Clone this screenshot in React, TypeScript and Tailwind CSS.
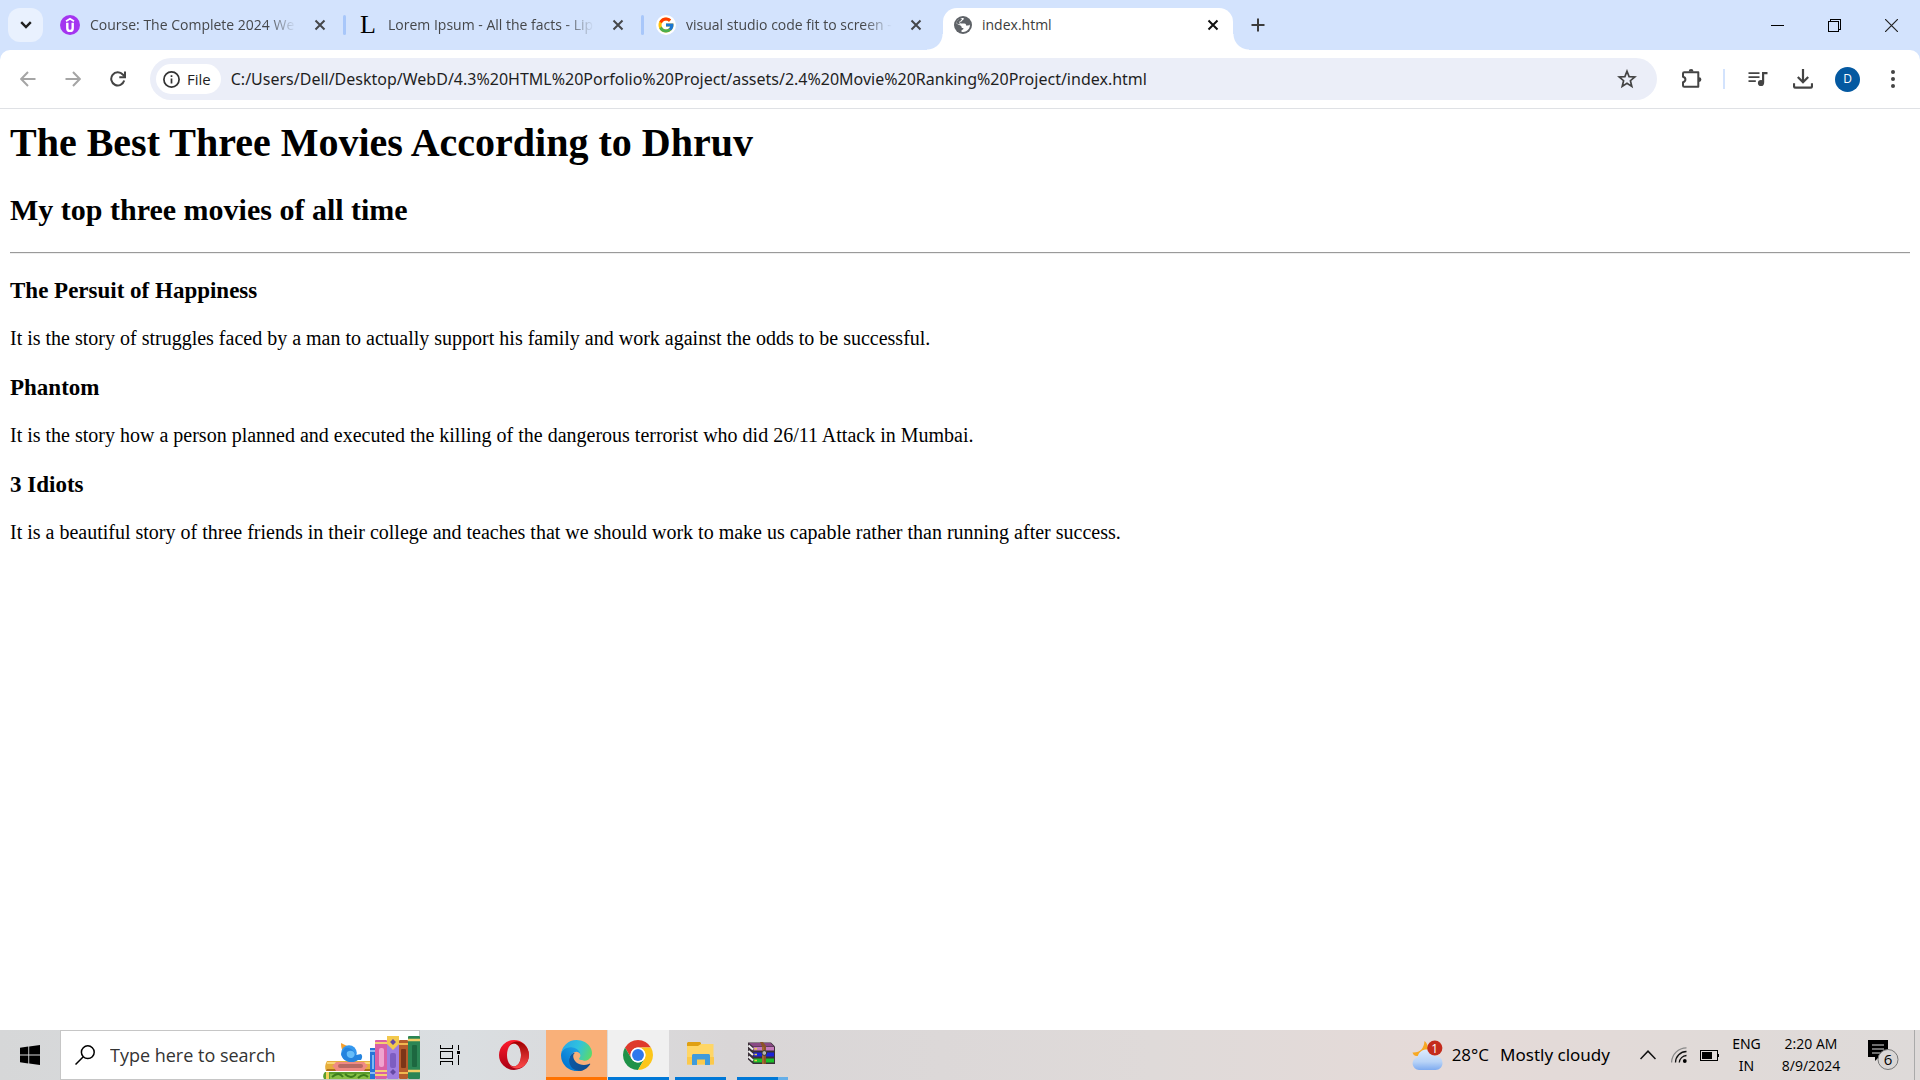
import type { ReactNode } from "react";
import { FcGoogle } from "react-icons/fc";

function CloseGlyph({ className }: { className: string }) {
  return (
    <svg viewBox="0 0 12 12" className={"h-3 w-3 " + className} fill="none" stroke="currentColor" strokeWidth="2">
      <path d="M1.5 1.5 10.5 10.5M10.5 1.5 1.5 10.5" />
    </svg>
  );
}

function UdemyIcon() {
  return (
    <svg viewBox="0 0 20 20" className="h-5 w-5">
      <circle cx="10" cy="10" r="10" fill="#a435f0" />
      <path d="M6 6.2 10 3.8l4 2.4" fill="none" stroke="#fff" strokeWidth="1.8" />
      <path d="M7.3 7.8v5.4a2.7 2.7 0 0 0 5.4 0V7.8" fill="none" stroke="#fff" strokeWidth="2.4" />
    </svg>
  );
}

function LipsumIcon() {
  return <span className="block w-5 text-center font-['Liberation_Serif',serif] text-[26px] leading-5 text-black">L</span>;
}

function GoogleIcon() {
  return (
    <span className="flex h-5 w-5 items-center justify-center rounded-full bg-white">
      <FcGoogle className="h-[18px] w-[18px]" />
    </span>
  );
}

function GlobeIcon() {
  return (
    <svg viewBox="0 0 20 20" className="h-5 w-5">
      <circle cx="10" cy="10" r="9" fill="#5f6368" />
      <path
        d="M10.6 3c.5 1.2-.3 2-1.2 2.3-.4 1.3-1.3 1.4-2.3 1.5-.1 1.5.2 1.8 1.5 1.8h2.8c1.4 0 1.7.8 1.6 2h1.8c1 0 1.7-.3 2.1-1 .3 3-1.3 5.600-3.800 6.700C11.400 17 9.600 17 8.500 16.700c-.2-.9.1-1.700.8-1.900 1.200-.2 1.200-1 1-1.700-1.700.1-2-.8-2-2.100L3.200 8.400C3.900 5.200 6.900 2.800 10.600 3Z"
        fill="#fff"
      />
      <path d="M8 3.300c-2.700.8-4.500 2.700-4.900 5.300l4.700 1c-1-.4-1.500-1.300-1.300-3.200C8.200 6.200 7.700 5 9 4.600Z" fill="#5f6368" />
    </svg>
  );
}

function Tab({ icon, title, divider }: { icon: ReactNode; title: string; divider: boolean }) {
  return (
    <div className="flex h-[34px] w-[298px] items-center pl-3">
      <a href="#tab" className="flex min-w-0 flex-1 items-center gap-[10px]">
        <span className="shrink-0">{icon}</span>
        <span className="flex-1 whitespace-nowrap text-[14px] leading-5 text-[#45474a] [mask-image:linear-gradient(to_right,black_86%,transparent)]">
          {title}
        </span>
      </a>
      <button aria-label="Close tab" className="ml-[14px] flex h-5 w-5 items-center justify-center text-[#45474a]">
        <CloseGlyph className="" />
      </button>
      {divider ? <span className="ml-[13px] h-5 w-[3px] rounded-full bg-[#a8c7fa]" /> : <span className="w-4" />}
    </div>
  );
}

function TabStrip() {
  return (
    <header className="flex h-[50px] items-center bg-[#d3e3fd] pl-2">
      <button aria-label="Search tabs" className="mr-[5px] flex h-[34px] w-[35px] items-center justify-center rounded-xl bg-[#e9f1fe]">
        <svg viewBox="0 0 12 8" className="h-2 w-3" fill="none" stroke="#1f1f1f" strokeWidth="2.4">
          <path d="M1.200 1.200 6 6l4.800-4.800" />
        </svg>
      </button>
      <Tab icon={<UdemyIcon />} title="Course: The Complete 2024 We" divider />
      <Tab icon={<LipsumIcon />} title="Lorem Ipsum - All the facts - Lip" divider />
      <Tab icon={<GoogleIcon />} title="visual studio code fit to screen -" divider={false} />
      <div className="relative ml-px flex h-[42px] w-[290px] items-center self-end rounded-t-[14px] bg-white pb-2 pl-[10px] pr-[14px]">
        <span className="absolute -left-4 bottom-0 h-4 w-4 bg-[radial-gradient(circle_at_0_0,#d3e3fd_15px,white_16px)]" />
        <span className="absolute -right-4 bottom-0 h-4 w-4 bg-[radial-gradient(circle_at_100%_0,#d3e3fd_15px,white_16px)]" />
        <a href="#index" className="flex flex-1 items-center gap-[9px] text-[14px] leading-5 text-[#3c3c3c]">
          <GlobeIcon />
          index.html
        </a>
        <button aria-label="Close tab" className="flex h-5 w-3 items-center justify-center text-[#111]">
          <CloseGlyph className="shrink-0" />
        </button>
      </div>
      <button aria-label="New tab" className="ml-[14px] flex h-[34px] w-[22px] items-center justify-center">
        <svg viewBox="0 0 14 14" className="h-[14px] w-[14px]" stroke="#3c3c3c" strokeWidth="2">
          <path d="M7 0.500v13M.5 7h13" />
        </svg>
      </button>
      <div className="ml-auto flex h-full">
        <button aria-label="Minimize" className="flex w-[57px] items-center justify-center">
          <svg viewBox="0 0 13 13" className="h-[13px] w-[13px]">
            <path d="M0 6h13" stroke="#000" shapeRendering="crispEdges" />
          </svg>
        </button>
        <button aria-label="Restore" className="flex w-[57px] items-center justify-center">
          <svg viewBox="0 0 13 13" className="h-[13px] w-[13px]" fill="none" stroke="#000" shapeRendering="crispEdges">
            <path d="M.5 2.500h10v10h-10zM2.500 2.500v-2h10v10h-2" />
          </svg>
        </button>
        <button aria-label="Close" className="flex w-[57px] items-center justify-center">
          <svg viewBox="0 0 13 13" className="h-[13px] w-[13px]" stroke="#222" strokeWidth="1.200">
            <path d="M0 0 13 13M13 0 0 13" />
          </svg>
        </button>
      </div>
    </header>
  );
}

function ToolButton({ label, children }: { label: string; children: ReactNode }) {
  return (
    <button aria-label={label} className="flex h-10 w-[45px] shrink-0 items-center justify-center">
      {children}
    </button>
  );
}

function Toolbar() {
  return (
    <div className="bg-[#d3e3fd]">
      <div className="flex h-[59px] items-center rounded-t-[10px] border-b border-[#dfe1e5] bg-white px-[5px]">
        <ToolButton label="Back">
          <svg viewBox="0 0 16 16" className="h-4 w-4" fill="none" stroke="#a5a5a5" strokeWidth="2">
            <path d="M15.500 8H1.500M8 1 1.200 8 8 15" />
          </svg>
        </ToolButton>
        <ToolButton label="Forward">
          <svg viewBox="0 0 16 16" className="h-4 w-4" fill="none" stroke="#a5a5a5" strokeWidth="2">
            <path d="M.5 8h14M8 1l6.800 7L8 15" />
          </svg>
        </ToolButton>
        <ToolButton label="Reload">
          <svg viewBox="0 0 16 16" className="h-4 w-4" fill="none" stroke="#444" strokeWidth="2">
            <path d="M14.200 9.600A6.600 6.600 0 1 1 12.800 3.500L15 5.800" />
            <path d="M15 .5v5.700H9.300" />
          </svg>
        </ToolButton>
        <div className="ml-[10px] flex h-[42px] flex-1 items-center rounded-full bg-[#ebeef8] pl-[6px] pr-5">
          <button className="flex h-[30px] items-center gap-[7px] rounded-full bg-white pl-[7px] pr-[10px] text-[15px] leading-5 text-[#1f1f1f]">
            <svg viewBox="0 0 17 17" className="h-[17px] w-[17px]" fill="none" stroke="#333">
              <circle cx="8.500" cy="8.500" r="7.600" strokeWidth="1.700" />
              <path d="M8.500 7.500v5M8.500 4.300v1.700" strokeWidth="1.700" />
            </svg>
            File
          </button>
          <input
            aria-label="Address and search bar"
            className="ml-[10px] min-w-0 flex-1 bg-transparent font-['Noto_Sans',sans-serif] text-[16px] leading-6 text-[#1f1f1f] outline-none"
            defaultValue="C:/Users/Dell/Desktop/WebD/4.3%20HTML%20Porfolio%20Project/assets/2.4%20Movie%20Ranking%20Project/index.html"
          />
          <button aria-label="Bookmark this tab">
            <svg viewBox="0 0 20 20" className="h-5 w-5" fill="none" stroke="#444" strokeWidth="1.700">
              <path d="m10 2.200 2.100 5.400 5.700.4-4.400 3.700 1.400 5.700L10 14.300l-4.800 3.100 1.400-5.700L2.200 8l5.700-.4z" />
            </svg>
          </button>
        </div>
        <div className="ml-3 flex items-center">
          <ToolButton label="Extensions">
            <svg viewBox="0 0 22 22" className="h-[22px] w-[22px]">
              <path
                d="M3.300 4.300h14v14.400h-14c-.8 0-1.300-.4-1.300-1.200v-3.300c3.200-.8 3.200-4.600 0-5.400V5.500c0-.8.5-1.200 1.300-1.200Z"
                fill="none"
                stroke="#444"
                strokeWidth="2"
                strokeLinejoin="round"
              />
              <path d="M7.700 3.500a2.400 2.400 0 0 1 4.800 0zM18 9.200a2.400 2.400 0 0 1 0 4.800z" fill="#444" />
            </svg>
          </ToolButton>
          <span className="ml-[9px] mr-[10px] h-5 w-[2px] bg-[#d3e3fd]" />
          <ToolButton label="Media controls">
            <svg viewBox="0 0 20 16" className="h-4 w-5" fill="#444">
              <path d="M.5 1.200h11v1.900H.5zM.5 5.200h11v1.900H.5zM.5 9.200h7.300v1.900H.5zM14 1h5.500v2.200h-3.300v8.600H14z" />
              <circle cx="13" cy="12" r="3.100" />
            </svg>
          </ToolButton>
          <ToolButton label="Downloads">
            <svg viewBox="0 0 20 20" className="h-5 w-5" fill="none" stroke="#444" strokeWidth="2.200">
              <path d="M10 0v13M4.800 8 10 13.300 15.200 8M1 14.200V17c0 1 .6 1.700 1.700 1.700h14.600c1.100 0 1.700-.7 1.700-1.700v-2.800" />
            </svg>
          </ToolButton>
          <ToolButton label="Profile">
            <span className="flex h-[25px] w-[25px] items-center justify-center rounded-full bg-[#0459a1] text-[12px] leading-4 text-white">D</span>
          </ToolButton>
          <ToolButton label="Menu">
            <svg viewBox="0 0 4 18" className="h-[18px] w-1" fill="#444">
              <circle cx="2" cy="2" r="2" />
              <circle cx="2" cy="9" r="2" />
              <circle cx="2" cy="16" r="2" />
            </svg>
          </ToolButton>
        </div>
      </div>
    </div>
  );
}

const movies = [
  {
    title: "The Persuit of Happiness",
    text: "It is the story of struggles faced by a man to actually support his family and work against the odds to be successful.",
  },
  {
    title: "Phantom",
    text: "It is the story how a person planned and executed the killing of the dangerous terrorist who did 26/11 Attack in Mumbai.",
  },
  {
    title: "3 Idiots",
    text: "It is a beautiful story of three friends in their college and teaches that we should work to make us capable rather than running after success.",
  },
];

function Page() {
  return (
    <main className="flex-1 bg-white p-[10px] font-['Liberation_Serif','Times_New_Roman',serif] text-[20px] leading-[23px] text-black">
      <h1 className="text-[40px] font-bold leading-[48px]">The Best Three Movies According to Dhruv</h1>
      <h2 className="mt-[25px] text-[30px] font-bold leading-[35px]">My top three movies of all time</h2>
      <hr className="mb-[23px] mt-[25px] border-b border-t border-b-[#eeeeee] border-t-[#9a9a9a]" />
      {movies.map((movie) => (
        <section key={movie.title} className="mb-6">
          <h3 className="text-[23px] font-bold leading-[27px]">{movie.title}</h3>
          <p className="mt-[23px]">{movie.text}</p>
        </section>
      ))}
    </main>
  );
}

function BooksArt() {
  return (
    <svg viewBox="0 0 97 43" className="h-[43px] w-[97px] shrink-0">
      <path d="M2 36h46v7H1c-1.300-2-1-5 1-7Z" fill="#5c9e2c" />
      <path d="M7 38h40v5H7z" fill="#86bf45" />
      <path d="M9 41c5-4 8-4 11 0M22 38c4 4 8 4 11 0M35 42c4-4 7-4 10-1" stroke="#3d7d1d" strokeWidth="2" fill="none" />
      <rect x="3" y="36" width="3" height="7" fill="#f3d35a" />
      <path d="M4 25h43v10H3c-1.500-3-1-7 1-10Z" fill="#e6ae3c" />
      <path d="M4 33h43v2H3z" fill="#b06e1c" />
      <path d="M4 26h43v2H4z" fill="#f9d77a" />
      <path d="M13 26h28c1.500 1 2 3 4 4-2 1-3 3-4 5H13c-1-2-2-4-4-5 2-1 3-3 4-4Z" fill="#f08a83" />
      <rect x="15" y="28" width="25" height="4" rx="2" fill="#b86963" />
      <path d="m18 7 8 4-5 5c-2-2-3-4-3-9Z" fill="#f6a02d" />
      <circle cx="26" cy="17" r="7.800" fill="#3498ef" />
      <path d="M18 18c2 10 14 9 17 6h3c2-3 1-5 0-6l-5 1c-3-6-7-8-11-7Z" fill="#2584df" />
      <path d="M24 16c6-4 11 3 5 6-4 0-6-2-5-6Z" fill="#66bdf9" />
      <rect x="47" y="12" width="5" height="31" fill="#2674d8" />
      <path d="M47 15h5M47 37h5" stroke="#a9d4fb" strokeWidth="1.500" />
      <rect x="49" y="19" width="2" height="14" fill="#7db8f5" />
      <rect x="52" y="4" width="12" height="39" rx="1" fill="#d960a5" />
      <path d="M52 7h12M52 35h12M52 39h12" stroke="#f5cf73" strokeWidth="2" />
      <rect x="56" y="12" width="5" height="19" rx="2" fill="#f0a4cf" />
      <rect x="64" y="0" width="12" height="43" rx="1" fill="#a07ee0" />
      <path d="M64 0h12v8l-6 6-6-6Z" fill="#f3c94d" />
      <path d="m70 3 3 3-3 3-3-3zM70 33l3 3-3 3-3-3z" fill="#6549a4" />
      <rect x="67" y="17" width="6" height="15" rx="2" fill="#7d5dc1" />
      <rect x="76" y="4" width="9" height="39" rx="1" fill="#b65d2c" />
      <path d="M76 8h9M76 37h9" stroke="#f1b84f" strokeWidth="2" />
      <rect x="78" y="13" width="5" height="19" rx="1" fill="#7c3518" />
      <rect x="85" y="0" width="12" height="43" rx="1" fill="#2c8655" />
      <path d="M85 4h12M85 35h12" stroke="#f3cf66" strokeWidth="2.500" />
      <rect x="89" y="9" width="5" height="22" rx="1" fill="#1d6840" />
    </svg>
  );
}

function OperaIcon() {
  return (
    <svg viewBox="0 0 30 30" className="h-[30px] w-[30px]">
      <defs>
        <linearGradient id="operaOuter" x1="0" y1="0" x2="0" y2="1">
          <stop offset="0" stopColor="#ff1b2d" />
          <stop offset="1" stopColor="#a70014" />
        </linearGradient>
        <linearGradient id="operaInner" x1="0" y1="0" x2="0" y2="1">
          <stop offset="0" stopColor="#9c0000" />
          <stop offset="1" stopColor="#ff4b4b" />
        </linearGradient>
      </defs>
      <path fillRule="evenodd" d="M15 0a15 15 0 1 0 0 30 15 15 0 1 0 0-30Zm0 3.500c4 0 7 5 7 11.500s-3 11.500-7 11.500S8 21.500 8 15s3-11.500 7-11.500Z" fill="url(#operaOuter)" />
      <path d="M10 5.800C14 .5 20 .5 25 4c6.500 6 6.500 16 0 22-5 3.500-11 3.500-15-1.800 1.500 1.500 3.200 2.300 5 2.300 4 0 7-5 7-11.500S19 3.500 15 3.500c-1.800 0-3.500.8-5 2.300Z" fill="url(#operaInner)" />
    </svg>
  );
}

function EdgeIcon() {
  return (
    <svg viewBox="0 0 256 256" className="h-[31px] w-[31px]">
      <defs>
        <linearGradient id="edgeA" x1="63" y1="177" x2="241" y2="177" gradientUnits="userSpaceOnUse">
          <stop offset="0" stopColor="#0c59a4" />
          <stop offset="1" stopColor="#114a8b" />
        </linearGradient>
        <linearGradient id="edgeB" x1="157" y1="110" x2="46" y2="231" gradientUnits="userSpaceOnUse">
          <stop offset="0" stopColor="#1b9de2" />
          <stop offset=".6" stopColor="#0c84d8" />
          <stop offset="1" stopColor="#0078d4" />
        </linearGradient>
        <linearGradient id="edgeC" x1="20" y1="40" x2="245" y2="130" gradientUnits="userSpaceOnUse">
          <stop offset="0" stopColor="#2aa9e6" />
          <stop offset=".5" stopColor="#2fc2df" />
          <stop offset="1" stopColor="#5bd96b" />
        </linearGradient>
      </defs>
      <path fill="url(#edgeA)" d="M235.680 195.460a93.730 93.730 0 0 1-10.540 4.710 101.870 101.870 0 0 1-35.900 6.460c-47.320 0-88.540-32.550-88.540-74.320a31.480 31.480 0 0 1 16.430-27.310c-42.800 1.800-53.800 46.400-53.800 72.530 0 73.880 68.090 81.370 82.760 81.370 7.910 0 19.840-2.300 27-4.560l1.310-.44a128.340 128.340 0 0 0 66.600-52.800 4 4 0 0 0-5.320-5.640z" />
      <path fill="url(#edgeB)" d="M105.730 241.420a79.200 79.200 0 0 1-22.740-21.340 80.720 80.720 0 0 1 29.530-120c3.120-1.470 8.450-4.130 15.540-4a32.350 32.350 0 0 1 25.690 13 31.880 31.880 0 0 1 6.360 18.660c0-.21 24.460-79.600-80-79.600-43.900 0-80 41.660-80 78.210a130.150 130.150 0 0 0 12.110 56 128 128 0 0 0 156.380 67.110 75.550 75.550 0 0 1-62.780-8z" />
      <path fill="url(#edgeC)" d="M152.330 148.860c-.81 1.050-3.300 2.500-3.300 5.660 0 2.610 1.700 5.120 4.720 7.230 14.380 10 41.490 8.680 41.560 8.680a59.560 59.560 0 0 0 30.270-8.350 61.380 61.380 0 0 0 30.430-52.880c.26-22.410-8-37.310-11.340-43.910C223.500 23.840 177.720 0 128 0A128 128 0 0 0 0 126.200c.48-36.540 36.800-66.050 80-66.050 3.500 0 23.460.34 42 10.070 16.340 8.580 24.900 18.940 30.850 29.210 6.180 10.670 7.280 24.150 7.280 29.520s-2.740 13.330-7.800 19.910z" />
    </svg>
  );
}

function ChromeIcon() {
  return (
    <svg viewBox="0 0 48 48" className="h-[30px] w-[30px]">
      <path d="M3.220 12A24 24 0 0 1 44.780 12H24A12 12 0 0 0 13.610 30Z" fill="#df3a2c" />
      <path d="M3.220 12 13.610 30A12 12 0 0 0 34.390 30L24 48A24 24 0 0 1 3.220 12Z" fill="#1f9248" />
      <path d="M44.780 12A24 24 0 0 1 24 48L34.390 30A12 12 0 0 0 24 12Z" fill="#fcc619" />
      <circle cx="24" cy="24" r="12" fill="#fff" />
      <circle cx="24" cy="24" r="9.500" fill="#2f78ec" />
    </svg>
  );
}

function ExplorerIcon() {
  return (
    <svg viewBox="0 0 28 24" className="h-6 w-7">
      <path d="M1 0h12l1 1v3H0V1z" fill="#e0a012" />
      <path d="M0 4h11l3-2h12.500v20.500H0z" fill="#ffd666" />
      <path d="M0 15h27v7.500H0z" fill="#fbc94c" />
      <path d="M5 23v-9.500c0-.8.7-1.500 1.500-1.500h15c.8 0 1.500.7 1.500 1.500V23h-5v-5.500h-8V23z" fill="#3f9bdc" />
    </svg>
  );
}

function WinRarIcon() {
  return (
    <svg viewBox="0 0 28 23" className="h-[23px] w-7">
      <path d="M0 .5h23l4 4V22H5L0 17.500z" fill="#3a3038" />
      <path d="M1 1h21.500l3.500 3.500H5z" fill="#8a4a85" />
      <path d="M5.500 5H26v3.500H5.500z" fill="#c47bbb" />
      <path d="M5.500 10.500H26v4H5.500z" fill="#1a22d8" />
      <path d="M5.500 16.500H26v4H5.500z" fill="#1bbf2a" />
      <path d="M.5 3.500l4.500 4M.5 9l4.500 4M.5 14.500l4.500 4" stroke="#eee" strokeWidth="2" />
      <path d="M6.500 6.700h2.500M6.500 12.500h2.500M6.500 18.500h2.500" stroke="#e8c84a" strokeWidth="1.500" />
      <path d="M12 0h3l3 4v18h-4V4.500z" fill="#8b5427" />
      <path d="M15 5v17" stroke="#b97a3e" />
      <circle cx="16.300" cy="11" r="2.400" fill="#b8b8b0" stroke="#333" />
    </svg>
  );
}

function Taskbar() {
  return (
    <footer className="flex h-[50px] bg-[linear-gradient(to_right,#d6d7d8_0%,#dadee1_24%,#d9d6d7_38%,#dfdad9_60%,#e5dad8_75%,#e0dad8_90%,#dedad9_100%)] text-black">
      <button aria-label="Start" className="flex w-[60px] items-center justify-center">
        <svg viewBox="0 0 20 20" className="h-5 w-5">
          <path d="M0 2.700 8.300 1.600v8H0zM9.200 1.500 20 0v9.600H9.200zM0 10.400h8.300v8L0 17.300zM9.200 10.400H20V20L9.200 18.500z" />
        </svg>
      </button>
      <label className="flex w-[360px] items-center border border-[#c6c6c6] bg-white pl-[14px]">
        <svg viewBox="0 0 20 20" className="h-5 w-5 shrink-0" fill="none" stroke="#000" strokeWidth="1.500">
          <circle cx="12.800" cy="7.200" r="6.400" />
          <path d="M8.300 11.700.5 19.500" />
        </svg>
        <input
          aria-label="Search"
          placeholder="Type here to search"
          className="ml-[15px] min-w-0 flex-1 bg-transparent text-[18px] leading-6 outline-none placeholder:text-[#333]"
        />
        <span className="-mr-px self-end">
          <BooksArt />
        </span>
      </label>
      <button aria-label="Task view" className="flex w-[60px] items-center justify-center">
        <svg viewBox="0 0 20 20" className="h-5 w-5" fill="none" stroke="#000" strokeWidth="1" shapeRendering="crispEdges">
          <path d="M.5 0v3.500h12V0M.5 20v-3.500h12V20M.5 6.500h12v7H.5zM18.500 0v5M18.500 10v10" />
          <path d="M17 6h3v3h-3z" fill="#000" stroke="none" />
        </svg>
      </button>
      <button aria-label="Opera" className="ml-1 flex w-[60px] items-center justify-center">
        <OperaIcon />
      </button>
      <button aria-label="Microsoft Edge" className="ml-[2px] flex w-[61px] items-center justify-center border-b-[3px] border-[#ff7200] bg-[#f9b079] pt-[3px]">
        <EdgeIcon />
      </button>
      <button aria-label="Google Chrome" className="ml-px flex w-[61px] items-center justify-center border-b-[3px] border-[#0078d7] bg-[#f0f0f0] pr-[2px] pt-[3px]">
        <ChromeIcon />
      </button>
      <button aria-label="File Explorer" className="ml-[6px] flex w-[51px] items-center justify-center border-b-[3px] border-[#0078d7]">
        <ExplorerIcon />
      </button>
      <button aria-label="WinRAR" className="ml-[11px] flex w-[51px] flex-col">
        <span className="flex flex-1 items-center pl-[11px]">
          <WinRarIcon />
        </span>
        <span className="flex h-[3px] w-full">
          <span className="w-[41px] bg-[#0078d7]" />
          <span className="flex-1 bg-[#66afe8]" />
        </span>
      </button>
      <div className="ml-auto flex items-center">
        <button className="flex items-center text-[17px] leading-6">
          <svg viewBox="0 0 31 31" className="mr-[9px] h-[31px] w-[31px]">
            <defs>
              <linearGradient id="cloud" x1="0" y1="0" x2="0" y2="1">
                <stop offset="0" stopColor="#dcebfd" />
                <stop offset=".6" stopColor="#b8d3f7" />
                <stop offset="1" stopColor="#7eabf0" />
              </linearGradient>
            </defs>
            <path d="M12.500 1c4 3 5 10 1 15H4C2 15.500 1 14 .5 12.500 8 13 12 8.500 12.500 1Z" fill="#f7a823" />
            <path d="M7 30a6.500 6.500 0 0 1-1.500-12.800C6.500 12 10.500 9.500 14.500 9.500c4.500 0 7.500 2.500 8.500 6.500 4 0 7.500 2.500 7.500 7 0 4-3 7-7 7Z" fill="url(#cloud)" />
            <circle cx="22.800" cy="8" r="7.600" fill="#c42b1c" />
            <text x="22.800" y="12.500" textAnchor="middle" fontSize="12" fill="#fff">1</text>
          </svg>
          <span className="mr-[11px]">28°C</span>
          <span className="font-['Noto_Sans',sans-serif]">Mostly cloudy</span>
        </button>
        <button aria-label="Show hidden icons" className="ml-[30px]">
          <svg viewBox="0 0 16 10" className="h-[10px] w-4" fill="none" stroke="#111" strokeWidth="1.500">
            <path d="M.5 9 8 1.200 15.500 9" />
          </svg>
        </button>
        <button aria-label="Network" className="ml-[15px]">
          <svg viewBox="0 0 16 16" className="h-4 w-4" fill="none" stroke="#111" strokeWidth="1.300">
            <path d="M.6 15.500A15 15 0 0 1 15.500.8" stroke="#888" />
            <path d="M4.500 15.500A11 11 0 0 1 15.500 4.500M8.300 15.500a7.500 7.500 0 0 1 7.200-7" />
            <circle cx="13.800" cy="14" r="1.900" fill="#000" stroke="none" />
          </svg>
        </button>
        <button aria-label="Battery" className="ml-[13px]">
          <svg viewBox="0 0 19 11" className="h-[11px] w-[19px]" shapeRendering="crispEdges">
            <path d="M.5.5h17v10H.5z" fill="none" stroke="#000" />
            <path d="M2 2h10v7H2zM18 4h1v3h-1z" />
          </svg>
        </button>
        <button className="ml-3 w-[31px] font-['Noto_Sans',sans-serif] text-[14px] leading-[22px]">
          ENG
          <br />
          IN
        </button>
        <button className="ml-[13px] w-[72px] whitespace-nowrap text-[14px] leading-[22px]">
          2:20 AM
          <br />
          8/9/2024
        </button>
        <button aria-label="Notifications" className="relative ml-5 h-8 w-8">
          <svg viewBox="0 0 32 32" className="h-8 w-8">
            <path d="M1 1h20v17H12l-4 4v-4H1z" />
            <path d="M5 6h12M5 10h12M5 14h8" stroke="#ddd" strokeWidth="1.200" />
            <circle cx="21" cy="20.500" r="10" fill="#d9d6d5" stroke="#777" />
            <text x="21" y="26" textAnchor="middle" fontSize="15" fill="#000">6</text>
          </svg>
        </button>
        <span className="ml-[15px] mr-[5px] h-[50px] w-px bg-[#aaa]" />
      </div>
    </footer>
  );
}

export default function App() {
  return (
    <div className="flex min-h-screen flex-col font-['Segoe_UI','Open_Sans',sans-serif]">
      <TabStrip />
      <Toolbar />
      <Page />
      <Taskbar />
    </div>
  );
}
